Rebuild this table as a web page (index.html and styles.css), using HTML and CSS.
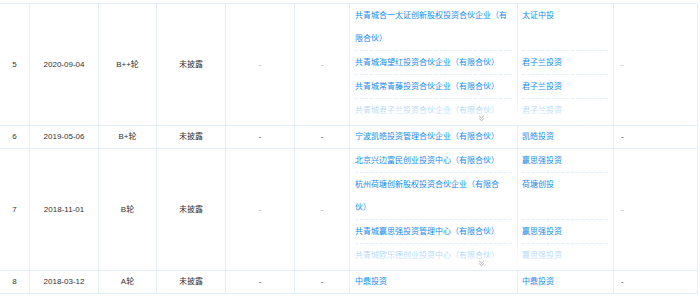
FILE: index.html
```html
<!DOCTYPE html>
<html lang="zh-CN">
<head>
<meta charset="utf-8">
<title>融资历程</title>
<link rel="stylesheet" href="styles.css">
</head>
<body>
<table class="fin">
  <colgroup>
    <col class="c1"><col class="c2"><col class="c3"><col class="c4"><col class="c5"><col class="c6"><col class="c7"><col class="c8"><col class="c9">
  </colgroup>
  <tbody>
    <tr>
      <td class="ctr">5</td>
      <td class="ctr">2020-09-04</td>
      <td class="ctr">B++轮</td>
      <td class="ctr">未披露</td>
      <td class="ctr muted">-</td>
      <td class="ctr muted">-</td>
      <td colspan="2" class="inv">
        <div class="inv-box clamped">
          <div class="inv-row"><div class="nm"><div class="t"><a>共青城合一太证创新股权投资合伙企业（有限合伙）</a></div></div><div class="br"><div class="t"><a>太证中投</a></div></div></div>
          <div class="inv-row"><div class="nm"><div class="t"><a>共青城海望红投资合伙企业（有限合伙）</a></div></div><div class="br"><div class="t"><a>君子兰投资</a></div></div></div>
          <div class="inv-row"><div class="nm"><div class="t"><a>共青城常青藤投资合伙企业（有限合伙）</a></div></div><div class="br"><div class="t"><a>君子兰投资</a></div></div></div>
          <div class="inv-row"><div class="nm"><div class="t"><a>共青城君子兰投资合伙企业（有限合伙）</a></div></div><div class="br"><div class="t"><a>君子兰投资</a></div></div></div>
          <div class="fade"></div>
          <svg class="more" width="7" height="7" viewBox="0 0 7 7"><path d="M1.2 1 L3.5 3 L5.8 1 M1.2 3.6 L3.5 5.6 L5.8 3.6" fill="none" stroke="#a8a8a8" stroke-width="0.9"/></svg>
        </div>
      </td>
      <td class="lft muted">-</td>
    </tr>
    <tr>
      <td class="ctr">6</td>
      <td class="ctr">2019-05-06</td>
      <td class="ctr">B+轮</td>
      <td class="ctr">未披露</td>
      <td class="ctr">-</td>
      <td class="ctr">-</td>
      <td colspan="2" class="inv">
        <div class="inv-box">
          <div class="inv-row"><div class="nm"><div class="t"><a>宁波凯皓投资管理合伙企业（有限合伙）</a></div></div><div class="br"><div class="t"><a>凯皓投资</a></div></div></div>
        </div>
      </td>
      <td class="lft">-</td>
    </tr>
    <tr>
      <td class="ctr">7</td>
      <td class="ctr">2018-11-01</td>
      <td class="ctr">B轮</td>
      <td class="ctr">未披露</td>
      <td class="ctr muted">-</td>
      <td class="ctr muted">-</td>
      <td colspan="2" class="inv">
        <div class="inv-box clamped">
          <div class="inv-row"><div class="nm"><div class="t"><a>北京兴边富民创业投资中心（有限合伙）</a></div></div><div class="br"><div class="t"><a>赢思强投资</a></div></div></div>
          <div class="inv-row"><div class="nm"><div class="t"><a>杭州荷塘创新股权投资合伙企业（有限合伙）</a></div></div><div class="br"><div class="t"><a>荷塘创投</a></div></div></div>
          <div class="inv-row"><div class="nm"><div class="t"><a>共青城赢思强投资管理中心（有限合伙）</a></div></div><div class="br"><div class="t"><a>赢思强投资</a></div></div></div>
          <div class="inv-row"><div class="nm"><div class="t"><a>共青城欧乐德创业投资中心（有限合伙）</a></div></div><div class="br"><div class="t"><a>赢思强投资</a></div></div></div>
          <div class="fade"></div>
          <svg class="more" width="7" height="7" viewBox="0 0 7 7"><path d="M1.2 1 L3.5 3 L5.8 1 M1.2 3.6 L3.5 5.6 L5.8 3.6" fill="none" stroke="#a8a8a8" stroke-width="0.9"/></svg>
        </div>
      </td>
      <td class="lft muted">-</td>
    </tr>
    <tr>
      <td class="ctr">8</td>
      <td class="ctr">2018-03-12</td>
      <td class="ctr">A轮</td>
      <td class="ctr">未披露</td>
      <td class="ctr">-</td>
      <td class="ctr">-</td>
      <td colspan="2" class="inv">
        <div class="inv-box">
          <div class="inv-row"><div class="nm"><div class="t"><a>中鼎投资</a></div></div><div class="br"><div class="t"><a>中鼎投资</a></div></div></div>
        </div>
      </td>
      <td class="lft">-</td>
    </tr>
  </tbody>
</table>
</body>
</html>
```
FILE: styles.css
```css
html, body {
  margin: 0;
  padding: 0;
  background: #fff;
}
body {
  font-family: "Liberation Sans", "Noto Sans CJK SC", sans-serif;
  font-size: 8px;
  color: #333;
}
.fin {
  margin-top: 3px;
  width: 698px;
  table-layout: fixed;
  border-collapse: separate;
  border-spacing: 0;
  border-top: 1px solid #e4eef6;
}
.c1 { width: 30px; }
.c2 { width: 69px; }
.c3 { width: 58px; }
.c4 { width: 69px; }
.c5 { width: 69px; }
.c6 { width: 55px; }
.c7 { width: 167px; }
.c8 { width: 97px; }
.c9 { width: 84px; }
.fin td {
  padding: 0;
  border-right: 1px solid #e4eef6;
  border-bottom: 1px solid #e4eef6;
  vertical-align: middle;
  line-height: 22px;
}
.fin td:first-child {
  border-right-color: #e8f0f7;
}
.ctr { text-align: center; }
.lft { text-align: left; padding-left: 7px !important; }
.muted { color: #9a9a9a; }

.inv-box {
  position: relative;
  overflow: hidden;
}
.inv-box.clamped {
  height: 121px;
  display: flex;
  flex-direction: column;
}
.inv-row {
  display: grid;
  grid-template-columns: 167px 96px;
  flex: none;
}
.clamped .inv-row:last-of-type {
  flex: 1 0 auto;
}
.nm {
  padding: 0 5px;
  display: flex;
  flex-direction: column;
}
.nm .t {
  padding-right: 3px;
}
.br {
  border-left: 1px solid #e4eef6;
  padding: 0 5px 0 4px;
  display: flex;
  flex-direction: column;
}
.t {
  flex: 1;
  line-height: 23px;
  border-bottom: 1px dashed #e4eef6;
}
.inv-row:last-of-type .t {
  border-bottom: 0;
}
.inv-row:only-of-type .t {
  line-height: 22px;
}
.t a {
  color: #128bed;
  text-decoration: none;
}
.fade {
  position: absolute;
  left: 0;
  right: 0;
  bottom: 0;
  height: 26px;
  background: linear-gradient(rgba(255, 255, 255, 0.45), #fff 95%);
}
.more {
  position: absolute;
  left: 50%;
  bottom: 3px;
  margin-left: -4px;
  display: block;
}
```
